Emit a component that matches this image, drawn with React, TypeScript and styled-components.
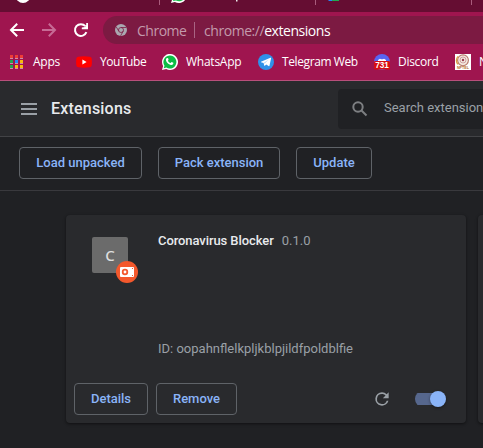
import React from 'react';
import styled, { createGlobalStyle } from 'styled-components';

const GlobalStyle = createGlobalStyle`
  * { box-sizing: border-box; }
  html, body { margin: 0; height: 100%; overflow: hidden; background: #202124; }
  svg { display: block; flex: none; }
`;

const Window = styled.div`
  width: 483px;
  height: 448px;
  overflow: hidden;
  display: flex;
  flex-direction: column;
  background: #202124;
  font-family: Roboto, sans-serif;
  white-space: nowrap;
`;

const TabStrip = styled.div`
  height: 12px;
  flex: none;
  background: #650d32;
`;

const Toolbar = styled.div`
  height: 35px;
  flex: none;
  display: flex;
  align-items: flex-start;
  padding: 4px 0 0 7px;
  background: #9f154f;
`;

const NavButton = styled.div<{ $gap: number }>`
  width: 20px;
  height: 28px;
  margin-right: ${p => p.$gap}px;
  display: flex;
  align-items: center;
  justify-content: center;
`;

const Omnibox = styled.div`
  flex: 1;
  height: 28px;
  padding-left: 12px;
  display: flex;
  align-items: center;
  border-radius: 14px 0 0 14px;
  background: #7c1a42;
  font-family: 'Open Sans', sans-serif;
  font-size: 14px;
  color: #c39aac;
`;

const SiteName = styled.span`
  width: 49px;
  margin-left: 10px;
  letter-spacing: -0.5px;
`;

const Separator = styled.span`
  width: 1px;
  height: 16px;
  margin: 0 9px 0 8px;
  background: #a96483;
`;

const Address = styled.span`
  letter-spacing: -0.45px;
  b { font-weight: 400; color: #fff; }
`;

const Bookmarks = styled.div`
  height: 34px;
  flex: none;
  display: flex;
  align-items: center;
  padding: 0 0 4px 8px;
  background: #9f154f;
  border-bottom: 1px solid #b84f7b;
`;

const Bookmark = styled.div<{ $width: number; $spacing?: number }>`
  width: ${p => p.$width}px;
  flex: none;
  display: flex;
  align-items: center;
  gap: 8px;
  font-family: 'Open Sans', sans-serif;
  font-size: 12px;
  letter-spacing: ${p => p.$spacing ?? 0}px;
  color: #fff;
`;

const Header = styled.header`
  height: 56px;
  flex: none;
  display: flex;
  align-items: center;
  padding-left: 21px;
  background: #292a2d;
  border-bottom: 1px solid #424346;
`;

const Title = styled.h1`
  width: 287px;
  margin: 0 0 0 14px;
  flex: none;
  font-size: 16px;
  font-weight: 500;
  line-height: 24px;
  letter-spacing: 0.2px;
  color: #e8eaed;
`;

const Search = styled.div`
  width: 145px;
  height: 40px;
  flex: none;
  display: flex;
  align-items: center;
  padding-left: 14px;
  gap: 16px;
  border-radius: 4px 0 0 4px;
  background: #202124;
  font-size: 13px;
  line-height: 16px;
  color: #9aa0a6;
  span { padding-bottom: 1px; }
`;

const DevToolbar = styled.div`
  height: 54px;
  flex: none;
  display: flex;
  align-items: flex-start;
  gap: 16px;
  padding: 10px 0 0 19px;
  border-bottom: 1px solid #39393d;
`;

const Button = styled.button<{ $width: number }>`
  width: ${p => p.$width}px;
  height: 32px;
  padding: 0;
  border: 1px solid #5f6368;
  border-radius: 4px;
  background: transparent;
  font: 500 13px/30px Roboto, sans-serif;
  color: #8ab4f8;
`;

const Cards = styled.main`
  display: flex;
  gap: 12px;
  padding: 24px 0 0 66px;
`;

const Card = styled.section`
  width: 400px;
  height: 208px;
  flex: none;
  display: flex;
  flex-direction: column;
  border-radius: 4px;
  background: #292a2d;
  box-shadow: 0 1px 2px rgba(0, 0, 0, 0.3), 0 1px 3px 1px rgba(0, 0, 0, 0.15);
`;

const CardBody = styled.div`
  height: 160px;
  display: flex;
  padding: 17px 0 0 26px;
`;

const IconTile = styled.div`
  position: relative;
  width: 36px;
  height: 36px;
  margin: 5px 30px 0 0;
  border-radius: 2px;
  background: #6b6b6b;
  color: #dedede;
  font: 500 15px/36px 'Noto Sans', sans-serif;
  text-align: center;
`;

const SourceBadge = styled.div`
  position: absolute;
  left: 24px;
  top: 24px;
`;

const Details = styled.div`
  display: flex;
  flex-direction: column;
  justify-content: space-between;
  padding-bottom: 18px;
  font-size: 13px;
  line-height: 17px;
  color: #9aa0a6;
`;

const Name = styled.span`
  margin-right: 8px;
  font-weight: 500;
  letter-spacing: -0.08px;
  color: #e8eaed;
`;

const CardFooter = styled.div`
  display: flex;
  align-items: center;
  gap: 8px;
  padding: 8px 20px 0 8px;
`;

const Controls = styled.div`
  margin-left: auto;
  display: flex;
  align-items: center;
  gap: 23px;
`;

const Toggle = styled.div`
  width: 31px;
  height: 16px;
  display: flex;
  align-items: center;
  justify-content: flex-end;
  background: linear-gradient(#56678d, #56678d) 0 2px / 28px 12px no-repeat;
  border-radius: 8px;
`;

const Knob = styled.div`
  width: 16px;
  height: 16px;
  border-radius: 50%;
  background: #8ab4f8;
  box-shadow: 0 1px 3px rgba(0, 0, 0, 0.4);
`;

const Refresh = ({ color, size }: { color: string; size: number }) => (
  <svg width={size} height={size} viewBox="0 0 24 24" fill={color}>
    <path d="M17.65 6.35A7.96 7.96 0 0 0 12 4a8 8 0 1 0 7.73 10h-2.08A6 6 0 1 1 12 6c1.66 0 3.14.69 4.22 1.78L13 11h7V4z" />
  </svg>
);

const ReloadIcon = () => (
  <svg width="16" height="16" viewBox="0 0 16 16">
    <path d="M13.4 10.2A5.9 5.9 0 1 1 12.4 4.2" fill="none" stroke="#fff" strokeWidth="2" />
    <path d="M15 1v6.2H8.8V5.4l3.2-.4L13.2 3V1z" fill="#fff" />
  </svg>
);

const Arrow = ({ back }: { back?: boolean }) => (
  <svg width="16" height="16" viewBox="0 0 16 16" fill="none" stroke={back ? '#fff' : '#c76b95'} strokeWidth="2">
    <path d={back ? 'M15 8H2M8.2 1.8L2 8l6.2 6.2' : 'M1 8h13M7.8 1.8L14 8l-6.2 6.2'} />
  </svg>
);

const TabPeek = () => (
  <svg width="483" height="12" viewBox="0 0 483 12">
    <circle cx="23" cy="-4.5" r="7.5" fill="#fff" />
    <path d="M159.5 0v5M315.5 0v5M471.5 0v5" stroke="#a95c7d" />
    <path d="M171 3l1.3-4h13.5a8 8 0 0 1-11 3z" fill="#fff" />
    <path d="M173 1l1-3h11a7 7 0 0 1-9 2.5z" fill="#16bd4a" />
    <path d="M236 0h1.5v1.5H236z" fill="#eee" />
    <path d="M328 0h5v1h-4z" fill="#2684fc" />
    <path d="M332 0h7v1h-7z" fill="#20a950" />
  </svg>
);

const ChromeIcon = () => (
  <svg width="12" height="12" viewBox="0 0 12 12">
    <circle cx="6" cy="6" r="6" fill="#aaa8b0" />
    <circle cx="6" cy="6" r="2.5" fill="none" stroke="#7c1a42" strokeWidth=".8" />
    <path d="M6 3.5h5.2M3.8 7.2L1.2 2.8M8.2 7.2L5.6 11.8" stroke="#7c1a42" strokeWidth=".8" />
  </svg>
);

const appColors = ['#ef3e36', '#ef3e36', '#ef3e36', '#24a451', '#268bf2', '#f7b90f', '#24a451', '#f7b90f', '#f7b90f'];

const AppsIcon = () => (
  <svg width="17" height="16" viewBox="0 0 17 16">
    {appColors.map((fill, i) => (
      <rect key={i} x={2 + (i % 3) * 5} y={1 + Math.floor(i / 3) * 5} width="3" height="3" fill={fill} />
    ))}
    <path d="M2 4.5h3M7 4.5h3M12 4.5h3M2 9.5h3M7 9.5h3M12 9.5h3M2 14.5h3M7 14.5h3M12 14.5h3" stroke="#cf8baa" />
  </svg>
);

const YouTubeIcon = () => (
  <svg width="16" height="16" viewBox="0 0 16 16">
    <path d="M2.3 2.7Q8 2 13.7 2.7Q15.3 3 15.6 4.5Q16.2 8 15.6 11.5Q15.3 13 13.7 13.3Q8 14 2.3 13.3Q.7 13 .4 11.5Q-.2 8 .4 4.5Q.7 3 2.3 2.7z" fill="#f00" />
    <path d="M6.4 5.6v4.8L10.6 8z" fill="#fff" />
  </svg>
);

const WhatsAppIcon = () => (
  <svg width="16" height="16" viewBox="0 0 16 16">
    <path d="M0 16l1.1-4A8 8 0 1 1 4.2 15z" fill="#fff" />
    <path d="M1.7 14.3l.8-2.6A6.5 6.5 0 1 1 4.5 13.6z" fill="#0dbd45" />
    <path d="M4.6 4.3l1-.3c.4 0 .6.4 1 1.7l-.7 1c.6 1.1 1.4 1.9 2.7 2.4l.9-1c1 .3 1.9.7 1.9 1 0 1.4-1.3 2-2.4 1.8C6.7 10.5 3.6 7.7 4 5.4c0-.4.3-.8.6-1.1z" fill="#fff" />
  </svg>
);

const TelegramIcon = () => (
  <svg width="16" height="16" viewBox="0 0 16 16">
    <circle cx="8" cy="8" r="8" fill="#2f91e8" />
    <path d="M3 7.8l9.4-4c.5-.2.8 0 .7.5l-1.6 7.5c-.1.5-.5.6-.9.3L8.2 10.4 6.9 11.7c-.3.3-.6.2-.7-.2L5.6 9 3 8.2z" fill="#fff" />
    <path d="M5.7 9l5-3.4-4 4" fill="#a8d2f6" />
  </svg>
);

const DiscordIcon = () => (
  <svg width="16" height="16" viewBox="0 0 16 16">
    <circle cx="8" cy="8" r="8" fill="#5865f2" />
    <path d="M4 7V6l2-1.3 1 .5h2l1-.5L12 6v1z" fill="#fff" />
    <rect x="0" y="7" width="16" height="8.5" rx="1.2" fill="#d80e12" />
    <text x="8" y="14.2" textAnchor="middle" fontFamily="Liberation Sans, sans-serif" fontWeight="700" fontSize="8.2" letterSpacing="0" fill="#fff">731</text>
  </svg>
);

const NptelIcon = () => (
  <svg width="16" height="16" viewBox="0 0 16 16">
    <path d="M0 0h16v16H0z" fill="#fff" />
    <circle cx="8" cy="6.3" r="5.4" fill="#f4e9df" stroke="#b8796b" strokeWidth="1.1" />
    <path d="M3 2.4a6.4 6.4 0 0 0 0 8" fill="none" stroke="#dca345" strokeWidth="1.3" />
    <circle cx="8" cy="6" r="3" fill="none" stroke="#a9546199" strokeWidth=".8" />
    <circle cx="8" cy="6" r="1.2" fill="#993b4c" />
    <text x="8" y="15.4" textAnchor="middle" fontFamily="Liberation Sans, sans-serif" fontWeight="700" fontSize="3.7" letterSpacing="0" fill="#b66b2c">NPTEL</text>
  </svg>
);

const MenuIcon = () => (
  <svg width="16" height="12" viewBox="0 0 16 12" fill="#9aa0a6">
    <path d="M0 0h16v2H0zM0 5h16v2H0zM0 10h16v2H0z" />
  </svg>
);

const SearchIcon = () => (
  <svg width="16" height="16" viewBox="0 0 16 16" fill="none" stroke="#7d7f82" strokeWidth="2">
    <circle cx="6" cy="6" r="4.7" />
    <path d="M9.5 9.5l5 5" />
  </svg>
);

const UnpackedIcon = () => (
  <svg width="22" height="22" viewBox="0 0 22 22">
    <circle cx="11" cy="11" r="11" fill="#f4582c" />
    <rect x="4" y="6" width="14" height="10" rx="1" fill="#fff" />
    <circle cx="9" cy="11" r="2.3" fill="none" stroke="#f4582c" strokeWidth="1.8" />
    <path d="M16 7h1v1h-1zM16 14h1v1h-1z" fill="#f4582c" />
  </svg>
);

export default function App() {
  return (
    <Window>
      <GlobalStyle />
      <TabStrip><TabPeek /></TabStrip>
      <Toolbar>
        <NavButton $gap={12}><Arrow back /></NavButton>
        <NavButton $gap={12}><Arrow /></NavButton>
        <NavButton $gap={12}><ReloadIcon /></NavButton>
        <Omnibox>
          <ChromeIcon />
          <SiteName>Chrome</SiteName>
          <Separator />
          <Address>chrome://<b>extensions</b></Address>
        </Omnibox>
      </Toolbar>
      <Bookmarks>
        <Bookmark $width={68} $spacing={-0.25}><AppsIcon />Apps</Bookmark>
        <Bookmark $width={86} $spacing={-0.45}><YouTubeIcon />YouTube</Bookmark>
        <Bookmark $width={96} $spacing={-0.25}><WhatsAppIcon />WhatsApp</Bookmark>
        <Bookmark $width={116} $spacing={-0.4}><TelegramIcon />Telegram Web</Bookmark>
        <Bookmark $width={81} $spacing={-0.3}><DiscordIcon />Discord</Bookmark>
        <Bookmark $width={60} $spacing={-0.3}><NptelIcon />NPTEL</Bookmark>
      </Bookmarks>
      <Header>
        <MenuIcon />
        <Title>Extensions</Title>
        <Search><SearchIcon /><span>Search extensions</span></Search>
      </Header>
      <DevToolbar>
        <Button $width={123}>Load unpacked</Button>
        <Button $width={122}>Pack extension</Button>
        <Button $width={76}>Update</Button>
      </DevToolbar>
      <Cards>
        <Card>
          <CardBody>
            <IconTile>C<SourceBadge><UnpackedIcon /></SourceBadge></IconTile>
            <Details>
              <div><Name>Coronavirus Blocker</Name>0.1.0</div>
              <div>ID: oopahnflelkpljkblpjildfpoldblfie</div>
            </Details>
          </CardBody>
          <CardFooter>
            <Button $width={74}>Details</Button>
            <Button $width={81}>Remove</Button>
            <Controls>
              <Refresh color="#9aa0a6" size={20} />
              <Toggle><Knob /></Toggle>
            </Controls>
          </CardFooter>
        </Card>
        <Card />
      </Cards>
    </Window>
  );
}
